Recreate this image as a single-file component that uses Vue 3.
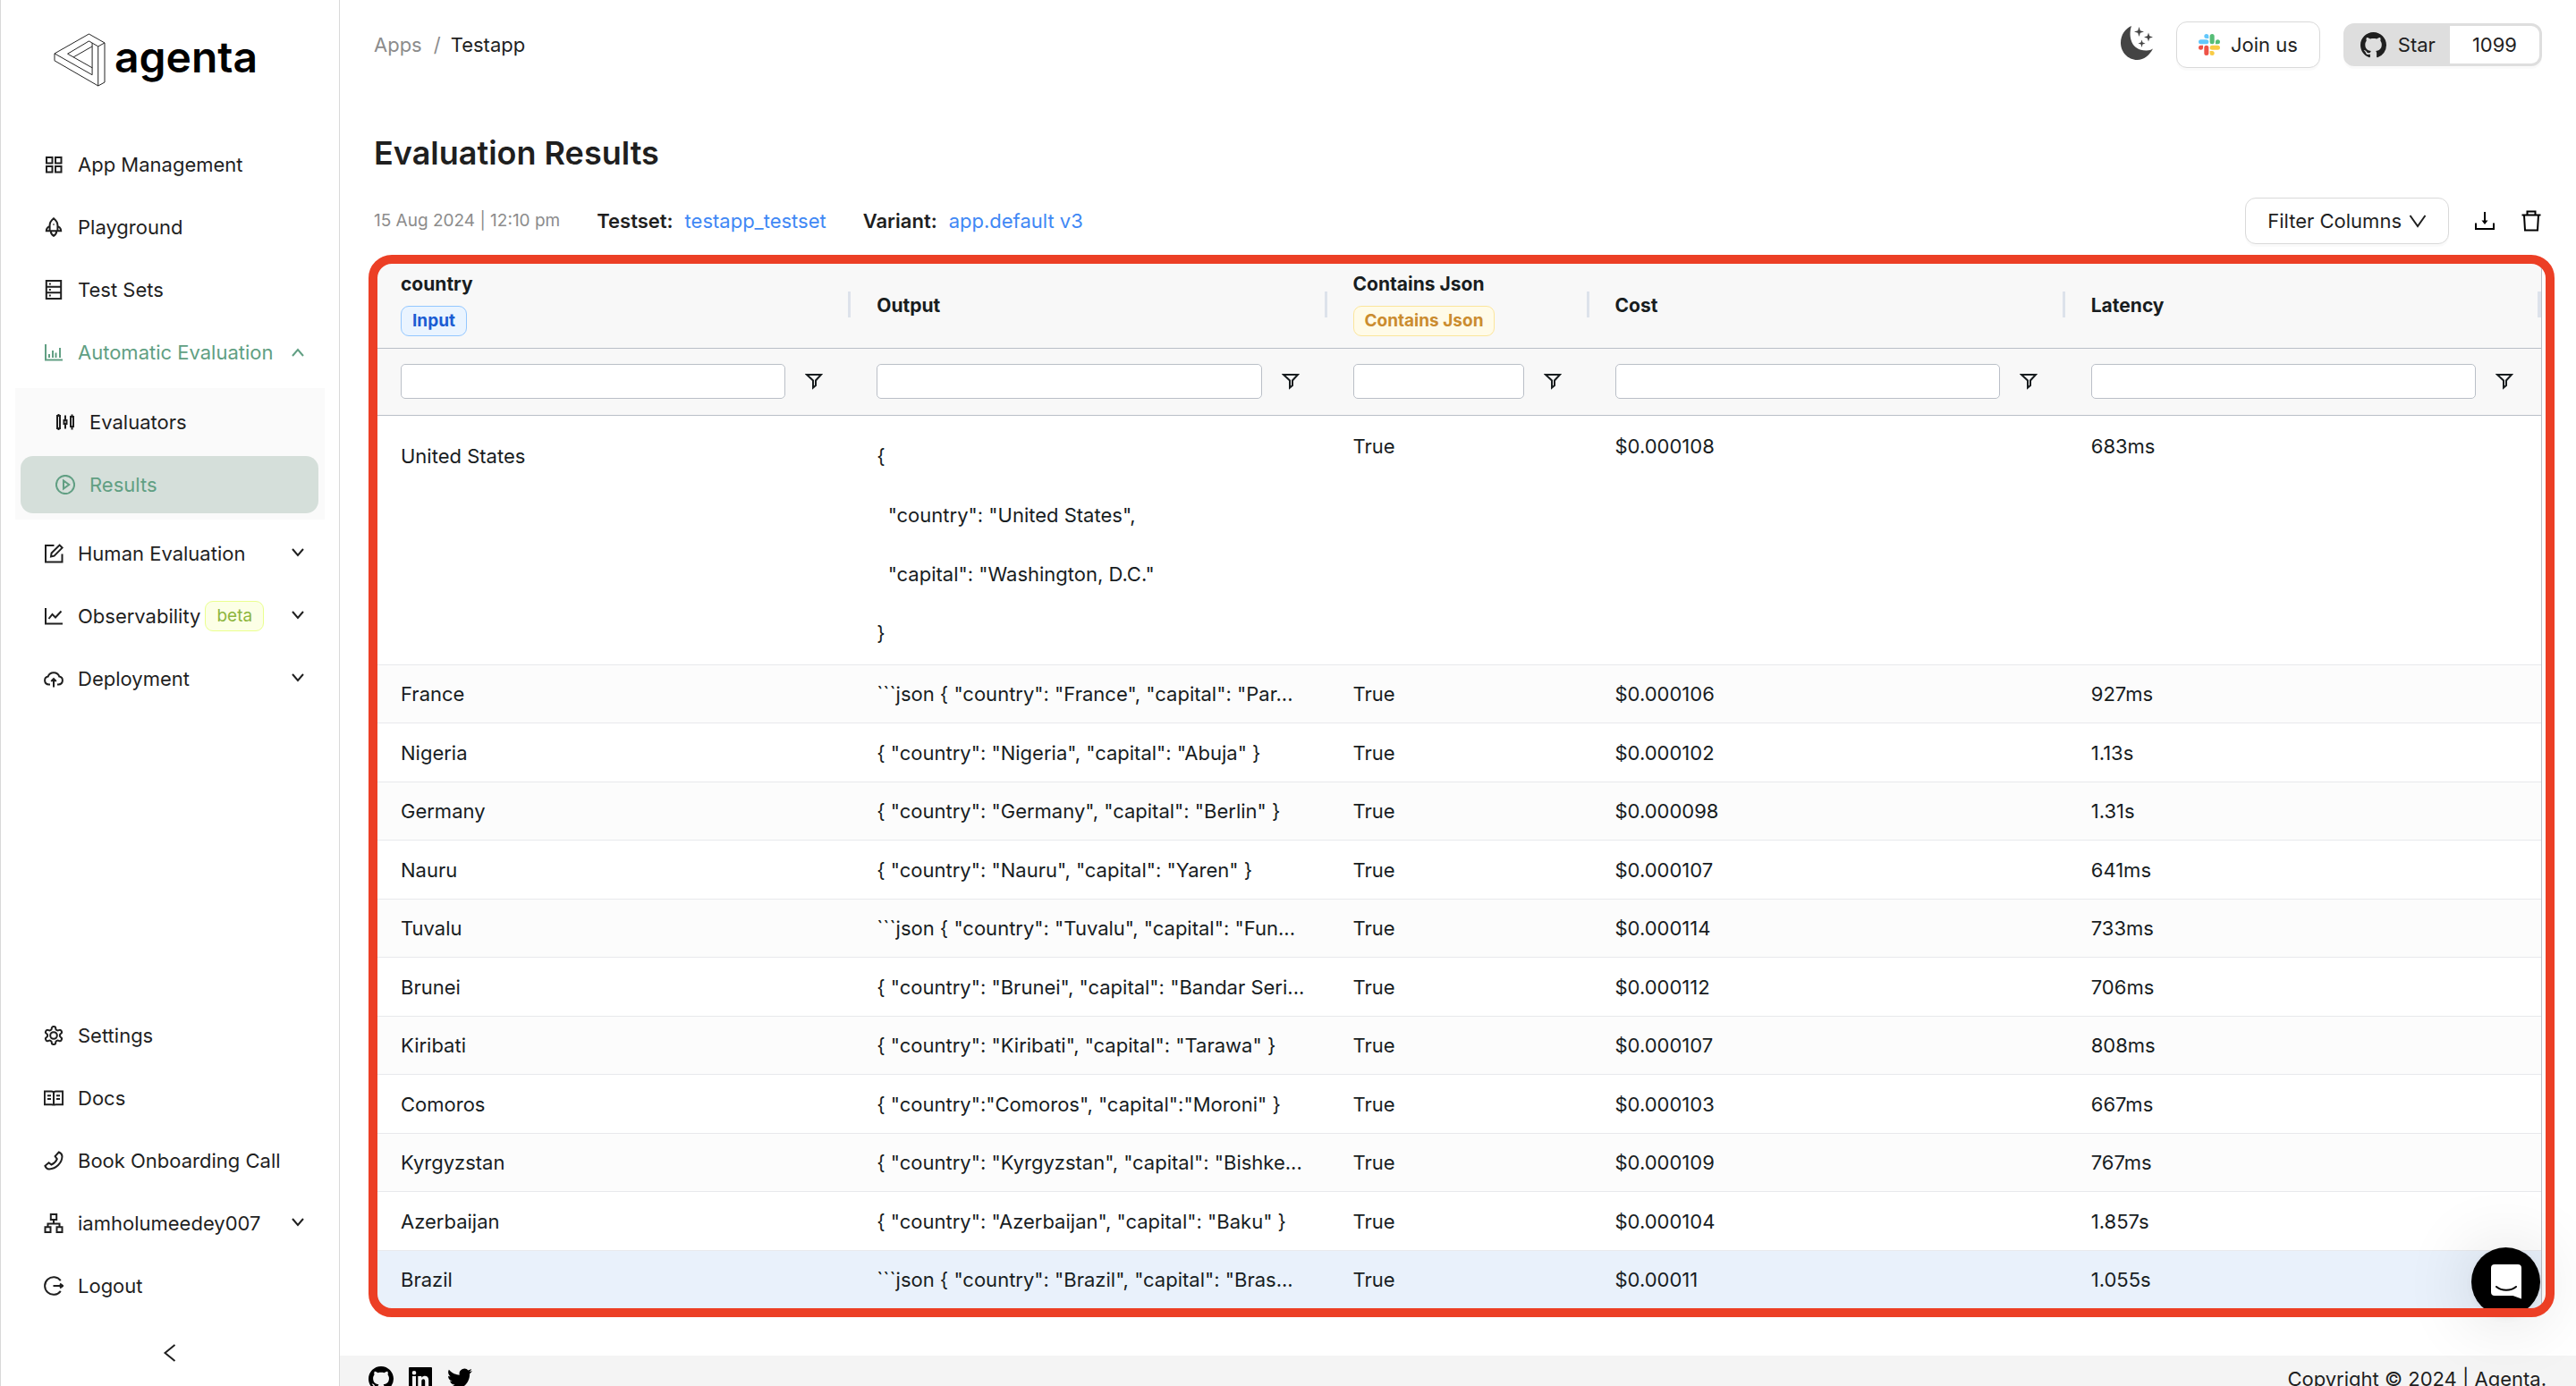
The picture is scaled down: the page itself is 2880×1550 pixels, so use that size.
<script setup>
import { ref } from "vue"

const GITHUB =
  "M8 0C3.58 0 0 3.58 0 8c0 3.54 2.29 6.53 5.47 7.59.4.07.55-.17.55-.38 0-.19-.01-.82-.01-1.49-2.01.37-2.53-.49-2.69-.94-.09-.23-.48-.94-.82-1.13-.28-.15-.68-.52-.01-.53.63-.01 1.08.58 1.23.82.72 1.21 1.87.87 2.33.66.07-.52.28-.87.51-1.07-1.78-.2-3.64-.89-3.64-3.95 0-.87.31-1.59.82-2.15-.08-.2-.36-1.02.08-2.12 0 0 .67-.21 2.2.82.64-.18 1.32-.27 2-.27s1.36.09 2 .27c1.53-1.04 2.2-.82 2.2-.82.44 1.1.16 1.92.08 2.12.51.56.82 1.27.82 2.15 0 3.07-1.87 3.75-3.65 3.95.29.25.54.73.54 1.48 0 1.07-.01 1.93-.01 2.2 0 .21.15.46.55.38A8.01 8.01 0 0 0 16 8c0-4.42-3.58-8-8-8z"

// 22x22 outline glyphs
const icons = {
  apps: "M3 3h6.5v6.5H3zM13 3h6.5v6.5H13zM3 13h6.5v6.5H3zM13 13h6.5v6.5H13z",
  rocket:
    "M11 1.2C8 3.6 6.6 6.4 6.6 9v6.2h8.8V9c0-2.600-1.400-5.400-4.400-7.800zM6.600 9.800C4 11 2.800 12.800 2.800 15.200h3.800M15.400 9.800c2.600 1.200 3.800 3 3.800 5.400h-3.800M7.800 15.500c0 3 1.400 4.300 3.200 5.300 1.800-1 3.200-2.300 3.200-5.300M10.500 8h1",
  database: "M2.800 1h16.400v20H2.800zM2.800 7.700h16.400M2.800 14.300h16.400M6 4.400h1.800M6 11h1.800M6 17.600h1.800",
  bars: "M2 2v17.500h19M6 13v4M10 9v8M13.500 11.500V17M18 6v11",
  sliders:
    "M2 4h3v14H2zM3.500 2v2M3.500 18v2M9.500 9h3v4h-3zM11 3.500V9M11 13v5.500M17 5h3v11h-3zM18.500 2.500V5M18.500 16v3.500",
  play: "M11 .9a10.100 10.100 0 1 0 0 20.200A10.100 10.100 0 0 0 11 .9zM9 6.500v9l6.200-4.500z",
  form: "M11.500 2H2v18.500h18.500v-9M8 14.500l.6-4L17.600 1.600l3 3-9 9z",
  line: "M2 2v17.500h19M5.500 14l4-5 3.500 3.500 6.500-7",
  cloud:
    "M7 17.500H5.500a4.500 4.500 0 0 1-.800-8.900 6.700 6.700 0 0 1 12.600 0 4.500 4.500 0 0 1-.8 8.900H15M11 20.500v-9M8.200 14L11 11.200 13.800 14",
  read: "M.9 3.500h7.600c1.300 0 2.500.7 2.500 1.500 0-.8 1.200-1.500 2.500-1.500h7.600v14.700h-7.600c-1.300 0-2.500.6-2.500 1.400 0-.8-1.200-1.400-2.500-1.400H.9zM11 5v14M4 8.300h4M4 12h4M14 8.300h4M14 12h4",
  phone:
    "M16.800 1.500c1.800.8 3.600 2.900 3.700 4.700C20.300 13.500 13.500 20.200 6 20.400c-1.900-.1-3.900-1.700-4.600-3.600l4.200-3.600 2.900 2.300c2.900-1.200 5.200-3.500 6.300-6.300L12.600 6z",
  tree: "M7.800 1h6.400v6H7.800zM1.500 15.300h6v5.700h-6zM14.500 15.300h6v5.700h-6zM11 7v4.500M4.500 15.300v-3.800h13v3.800",
  logout: "M18.800 5.200a9.800 9.800 0 1 0 0 11.600M10.500 11H21M18 8.600l3.200 2.400-3.200 2.400",
}

const mainMenu = [
  { label: "App Management", icon: "apps" },
  { label: "Playground", icon: "rocket" },
  { label: "Test Sets", icon: "database" },
  {
    label: "Automatic Evaluation",
    icon: "bars",
    open: true,
    expandable: true,
    children: [
      { label: "Evaluators", icon: "sliders" },
      { label: "Results", icon: "play", active: true },
    ],
  },
  { label: "Human Evaluation", icon: "form", expandable: true },
  { label: "Observability", icon: "line", expandable: true, tag: "beta" },
  { label: "Deployment", icon: "cloud", expandable: true },
]
const bottomMenu = [
  { label: "Settings", icon: "gear" },
  { label: "Docs", icon: "read" },
  { label: "Book Onboarding Call", icon: "phone" },
  { label: "iamholumeedey007", icon: "tree", expandable: true },
  { label: "Logout", icon: "logout" },
]

const columns = [
  { label: "country", tag: "Input", tone: "blue" },
  { label: "Output" },
  { label: "Contains Json", tag: "Contains Json", tone: "gold", narrow: true },
  { label: "Cost" },
  { label: "Latency" },
]
const filters = ref(columns.map(() => ""))

const rows = [
  ["United States", '{\n  "country": "United States",\n  "capital": "Washington, D.C."\n}', "$0.000108", "683ms"],
  ["France", '```json { "country": "France", "capital": "Par...', "$0.000106", "927ms"],
  ["Nigeria", '{ "country": "Nigeria", "capital": "Abuja" }', "$0.000102", "1.13s"],
  ["Germany", '{ "country": "Germany", "capital": "Berlin" }', "$0.000098", "1.31s"],
  ["Nauru", '{ "country": "Nauru", "capital": "Yaren" }', "$0.000107", "641ms"],
  ["Tuvalu", '```json { "country": "Tuvalu", "capital": "Fun...', "$0.000114", "733ms"],
  ["Brunei", '{ "country": "Brunei", "capital": "Bandar Seri...', "$0.000112", "706ms"],
  ["Kiribati", '{ "country": "Kiribati", "capital": "Tarawa" }', "$0.000107", "808ms"],
  ["Comoros", '{ "country":"Comoros", "capital":"Moroni" }', "$0.000103", "667ms"],
  ["Kyrgyzstan", '{ "country": "Kyrgyzstan", "capital": "Bishke...', "$0.000109", "767ms"],
  ["Azerbaijan", '{ "country": "Azerbaijan", "capital": "Baku" }', "$0.000104", "1.857s"],
  ["Brazil", '```json { "country": "Brazil", "capital": "Bras...', "$0.00011", "1.055s"],
]

const menus = [mainMenu, bottomMenu]
</script>

<template>
  <div class="page">
    <aside class="sidebar">
      <a href="#" class="logo">
        <svg class="logo-mark" viewBox="178 111 175 181" aria-hidden="true">
          <path
            d="M297 114L350 144V277L328 289L181 204V180ZM181 180L308 252V144M308 228L225 181L297 138L328 156L350 144M328 156V289M245 192L308 156"
          />
        </svg>
        <span>agenta</span>
      </a>
      <nav v-for="(menu, m) in menus" :key="m" class="menu" :class="{ bottom: m === 1 }">
        <template v-for="item in menu" :key="item.label">
          <a href="#" class="item" :class="{ open: item.open }">
            <svg v-if="item.icon === 'gear'" class="icon" viewBox="1 1 22 22" aria-hidden="true">
              <path
                d="M12.22 2h-.44a2 2 0 0 0-2 2v.18a2 2 0 0 1-1 1.73l-.43.25a2 2 0 0 1-2 0l-.15-.08a2 2 0 0 0-2.73.73l-.22.38a2 2 0 0 0 .73 2.730l.15.1a2 2 0 0 1 1 1.720v.51a2 2 0 0 1-1 1.740l-.15.09a2 2 0 0 0-.73 2.730l.22.38a2 2 0 0 0 2.730.73l.15-.08a2 2 0 0 1 2 0l.43.25a2 2 0 0 1 1 1.730V20a2 2 0 0 0 2 2h.44a2 2 0 0 0 2-2v-.18a2 2 0 0 1 1-1.730l.43-.25a2 2 0 0 1 2 0l.15.08a2 2 0 0 0 2.730-.73l.22-.39a2 2 0 0 0-.73-2.730l-.15-.08a2 2 0 0 1-1-1.740v-.5a2 2 0 0 1 1-1.740l.15-.09a2 2 0 0 0 .73-2.730l-.22-.38a2 2 0 0 0-2.730-.73l-.15.08a2 2 0 0 1-2 0l-.43-.25a2 2 0 0 1-1-1.730V4a2 2 0 0 0-2-2z"
              />
              <circle cx="12" cy="12" r="3.800" />
            </svg>
            <svg v-else class="icon" viewBox="0 0 22 22" aria-hidden="true"><path :d="icons[item.icon]" /></svg>
            <span>{{ item.label }}</span>
            <span v-if="item.tag" class="tag lime">{{ item.tag }}</span>
            <svg v-if="item.expandable" class="caret" viewBox="0 0 16 16" aria-hidden="true">
              <path :d="item.open ? 'M2 12l6-7 6 7' : 'M2 3l6 7 6-7'" />
            </svg>
          </a>
          <div v-if="item.children" class="submenu">
            <a v-for="child in item.children" :key="child.label" href="#" class="item" :class="{ active: child.active }">
              <svg class="icon" viewBox="0 0 22 22" aria-hidden="true"><path :d="icons[child.icon]" /></svg>
              <span>{{ child.label }}</span>
            </a>
          </div>
        </template>
      </nav>
      <button class="collapse" aria-label="Collapse sidebar">
        <svg viewBox="0 0 22 22" aria-hidden="true"><path d="M16.500 2L5.500 11l11 9" /></svg>
      </button>
    </aside>

    <div class="body">
      <main class="content">
        <header class="topbar">
          <nav class="crumbs" aria-label="Breadcrumb">
            <a href="#">Apps</a><span class="slash">/</span><span class="current">Testapp</span>
          </nav>
          <button class="theme" aria-label="Toggle theme">
            <svg viewBox="0 0 36 38" aria-hidden="true">
              <path
                d="M12 0C8 12 12 28 29 27.500c3 0 5-.8 7-2C32 33 26 38 18.500 38 8 38 0 29 0 19 0 10 5 3 12 0zM20.500 1l1.300 4.200L26 6.500l-4.200 1.300-1.300 4.200-1.300-4.200L15 6.500l4.200-1.300zM31 7.500l1.200 3.800L36 12.500l-3.800 1.200L31 17.500l-1.200-3.800L26 12.500l3.800-1.200zM23.500 15.500l1 3 3 1-3 1-1 3.500-1-3.500-3-1 3-1z"
              />
            </svg>
          </button>
          <button class="btn join">
            <svg viewBox="0 0 24 24" aria-hidden="true">
              <path
                fill="#ee5247"
                d="M5.042 15.165a2.528 2.528 0 0 1-2.520 2.523A2.528 2.528 0 0 1 0 15.165a2.527 2.527 0 0 1 2.522-2.520h2.520v2.520zM6.313 15.165a2.527 2.527 0 0 1 2.521-2.520 2.527 2.527 0 0 1 2.521 2.520v6.313A2.528 2.528 0 0 1 8.834 24a2.528 2.528 0 0 1-2.521-2.522v-6.313z"
              />
              <path
                fill="#62c7fb"
                d="M8.834 5.042a2.528 2.528 0 0 1-2.521-2.520A2.528 2.528 0 0 1 8.834 0a2.528 2.528 0 0 1 2.521 2.522v2.520H8.834zM8.834 6.313a2.528 2.528 0 0 1 2.521 2.521 2.528 2.528 0 0 1-2.521 2.521H2.522A2.528 2.528 0 0 1 0 8.834a2.528 2.528 0 0 1 2.522-2.521h6.312z"
              />
              <path
                fill="#55bd76"
                d="M18.956 8.834a2.528 2.528 0 0 1 2.522-2.521A2.528 2.528 0 0 1 24 8.834a2.528 2.528 0 0 1-2.522 2.521h-2.522V8.834zM17.688 8.834a2.528 2.528 0 0 1-2.523 2.521 2.527 2.527 0 0 1-2.520-2.521V2.522A2.527 2.527 0 0 1 15.165 0a2.528 2.528 0 0 1 2.523 2.522v6.312z"
              />
              <path
                fill="#f8cb45"
                d="M15.165 18.956a2.528 2.528 0 0 1 2.523 2.522A2.528 2.528 0 0 1 15.165 24a2.527 2.527 0 0 1-2.520-2.522v-2.522h2.520zM15.165 17.688a2.527 2.527 0 0 1-2.520-2.523 2.526 2.526 0 0 1 2.520-2.520h6.313A2.527 2.527 0 0 1 24 15.165a2.528 2.528 0 0 1-2.522 2.523h-6.313z"
              />
            </svg>
            Join us
          </button>
          <a href="#" class="star">
            <span class="star-label">
              <svg viewBox="0 0 16 16" aria-hidden="true"><path :d="GITHUB" /></svg>
              Star
            </span>
            <span class="star-count">1099</span>
          </a>
        </header>

        <h1>Evaluation Results</h1>

        <div class="meta">
          <span class="date">15 Aug 2024 | 12:10 pm</span>
          <span class="pair"><b>Testset:</b><a href="#">testapp_testset</a></span>
          <span class="pair"><b>Variant:</b><a href="#">app.default v3</a></span>
          <button class="btn filter-columns">
            Filter Columns
            <svg viewBox="0 0 20 20" aria-hidden="true"><path d="M1.500 4L10 16l8.500-12" /></svg>
          </button>
          <button class="tool" aria-label="Download">
            <svg viewBox="0 0 24 24" aria-hidden="true">
              <path d="M2 14.500V21h20v-6.500M12 2v11" /><path class="solid" d="M8.500 11.500h7L12 16z" />
            </svg>
          </button>
          <button class="tool" aria-label="Delete">
            <svg viewBox="0 0 24 24" aria-hidden="true"><path d="M1.500 5.500h21M7.500 5.500V1.500h9v4M4 5.500L5 22.500h14L20 5.500" /></svg>
          </button>
        </div>

        <section class="grid-wrap">
          <div class="grid">
            <table>
              <colgroup>
                <col v-for="c in columns" :key="c.label" :class="{ narrow: c.narrow }" />
              </colgroup>
              <thead>
                <tr class="titles">
                  <th v-for="c in columns" :key="c.label" scope="col">
                    <div class="head" :class="{ tagged: c.tag }">
                      <span>{{ c.label }}</span>
                      <span v-if="c.tag" class="tag" :class="c.tone">{{ c.tag }}</span>
                    </div>
                  </th>
                </tr>
                <tr class="filters">
                  <td v-for="(c, i) in columns" :key="c.label">
                    <div class="filter">
                      <input v-model="filters[i]" type="text" :aria-label="`${c.label} filter`" />
                      <button :aria-label="`Open ${c.label} filter menu`">
                        <svg viewBox="0 0 20 20" aria-hidden="true"><path d="M2 3h16l-6 6.500V15l-3 2.500v-8z" /></svg>
                      </button>
                    </div>
                  </td>
                </tr>
              </thead>
              <tbody>
                <tr v-for="(r, i) in rows" :key="r[0]" :class="{ tall: i === 0, hovered: i === rows.length - 1 }">
                  <td class="wrap">{{ r[0] }}</td>
                  <td class="wrap">{{ r[1] }}</td>
                  <td>True</td>
                  <td>{{ r[2] }}</td>
                  <td>{{ r[3] }}</td>
                </tr>
              </tbody>
            </table>
          </div>
          <div class="highlight"></div>
        </section>
      </main>

      <footer class="footer">
        <a href="#" aria-label="GitHub"><svg viewBox="0 0 16 16" aria-hidden="true"><path :d="GITHUB" /></svg></a>
        <a href="#" aria-label="LinkedIn">
          <svg viewBox="0 0 28 28" aria-hidden="true">
            <path
              fill-rule="evenodd"
              d="M2 1h24a1 1 0 0 1 1 1v24a1 1 0 0 1-1 1H2a1 1 0 0 1-1-1V2a1 1 0 0 1 1-1zM5 11v12h4V11zM7 5a2.300 2.300 0 1 0 0 4.600A2.300 2.300 0 0 0 7 5zM11.300 11v12h4v-6.500c0-3 3.900-3.200 3.900 0V23h4v-7.500c0-5.500-5.600-5.700-7.900-2.800V11z"
            />
          </svg>
        </a>
        <a href="#" aria-label="Twitter">
          <svg viewBox="0 0 24 24" aria-hidden="true">
            <path
              d="M23.953 4.570a10 10 0 01-2.825.775 4.958 4.958 0 002.163-2.723c-.951.555-2.005.959-3.127 1.184a4.920 4.920 0 00-8.384 4.482C7.690 8.095 4.067 6.130 1.640 3.162a4.822 4.822 0 00-.666 2.475c0 1.710.870 3.213 2.188 4.096a4.904 4.904 0 01-2.228-.616v.060a4.923 4.923 0 003.946 4.827 4.996 4.996 0 01-2.212.085 4.936 4.936 0 004.604 3.417 9.867 9.867 0 01-6.102 2.105c-.390 0-.779-.023-1.170-.067a13.995 13.995 0 007.557 2.209c9.053 0 13.998-7.496 13.998-13.985 0-.210 0-.420-.015-.630A9.935 9.935 0 0024 4.590z"
            />
          </svg>
        </a>
        <span class="copyright">Copyright © 2024 | Agenta.</span>
      </footer>
    </div>

    <button class="chat" aria-label="Open chat">
      <svg viewBox="0 0 34 39" aria-hidden="true">
        <path fill="#fff" d="M4 0h26a4 4 0 0 1 4 4v34.500L24.500 35H4a4 4 0 0 1-4-4V4a4 4 0 0 1 4-4z" />
        <path class="smile" d="M6 25c6 5 16 5 22 0" />
      </svg>
    </button>
  </div>
</template>

<style>
body {
  margin: 0;
  background: #fff;
}
</style>

<style scoped>
.page {
  display: flex;
  height: 100vh;
  overflow: hidden;
  font-family: Inter, "Liberation Sans", sans-serif;
  font-size: 22px;
  line-height: 32px;
  color: #1f1f1f;
}
.page *,
.page *::after {
  box-sizing: border-box;
}
a {
  color: inherit;
  text-decoration: none;
}
button {
  font: inherit;
  color: inherit;
  background: none;
  border: 0;
  padding: 0;
  cursor: pointer;
}
svg {
  display: block;
  flex: none;
}

/* Sidebar */
.sidebar {
  display: flex;
  flex-direction: column;
  flex: none;
  width: 380px;
  border: solid #d9d9d9;
  border-width: 0 1px;
}
.logo {
  display: flex;
  gap: 10px;
  padding: 37px 0 0 59px;
  margin-bottom: 55px;
  font-size: 48px;
  line-height: 54px;
  font-weight: 600;
  color: #000;
}
.logo-mark {
  width: 58px;
  height: 60px;
  fill: none;
  stroke: #222;
  stroke-width: 3;
}
.menu {
  display: flex;
  flex-direction: column;
  gap: 6px;
  padding: 0 16px;
}
.menu.bottom {
  margin-top: auto;
}
.item {
  display: flex;
  align-items: center;
  height: 64px;
  padding: 0 16px 0 32px;
  margin: 0 6px 0 0;
  border-radius: 14px;
  white-space: nowrap;
}
.icon {
  width: 22px;
  height: 22px;
  margin-right: 16px;
  fill: none;
  stroke: currentColor;
  stroke-width: 2;
}
.caret {
  width: 16px;
  height: 16px;
  margin-left: auto;
  fill: none;
  stroke: currentColor;
  stroke-width: 2;
}
.open,
.active {
  color: #619f83;
}
.submenu {
  display: flex;
  flex-direction: column;
  gap: 6px;
  padding: 6px 7px 7px 6px;
  margin-top: 2px;
  background: #fafafa;
}
.submenu .item {
  margin: 0;
  padding-left: 39px;
}
.active {
  background: #d5dfda;
}
.collapse {
  display: flex;
  align-items: center;
  justify-content: center;
  height: 74px;
  margin-top: 6px;
}
.collapse svg {
  width: 22px;
  height: 22px;
  fill: none;
  stroke: currentColor;
  stroke-width: 2;
}
.tag {
  height: 34px;
  padding: 0 12px;
  border: 1px solid;
  border-radius: 9px;
  font-size: 19px;
  line-height: 32px;
}
.lime {
  margin-left: 5px;
  color: #8db53c;
  background: #fcffe6;
  border-color: #eaff8f;
}
.blue {
  color: #1c5cd3;
  background: #eaf4ff;
  border-color: #94c7ff;
}
.gold {
  color: #cb8c2f;
  background: #fffbe8;
  border-color: #fbe59b;
}

/* Main area */
.body {
  flex: 1;
  min-width: 0;
}
.content {
  padding: 0 38px 51px;
}
.topbar {
  display: flex;
  align-items: center;
  height: 100px;
}
.crumbs {
  display: flex;
  margin-right: auto;
  color: #8c8c8c;
}
.slash {
  margin: 0 11px 0 13px;
}
.current {
  color: #1f1f1f;
}
.theme {
  margin-right: 26px;
  padding-bottom: 4px;
}
.theme svg {
  width: 36px;
  height: 38px;
  fill: #444;
}
.btn {
  display: flex;
  align-items: center;
  height: 52px;
  padding: 0 24px;
  border: 1px solid #d9d9d9;
  border-radius: 12px;
  background: #fff;
  box-shadow: 0 3px 0 rgba(0, 0, 0, 0.02);
}
.join {
  gap: 12px;
  margin-right: 26px;
}
.join svg {
  width: 24px;
  height: 24px;
}
.star {
  display: flex;
  height: 48px;
  border: 3px solid #dedede;
  border-radius: 12px;
  background: #dedede;
  box-shadow: 0 3px 0 rgba(0, 0, 0, 0.02);
}
.star-label {
  display: flex;
  align-items: center;
  gap: 13px;
  padding: 0 16px;
}
.star-label svg {
  width: 29px;
  height: 29px;
  fill: #1f1f1f;
}
.star-count {
  padding: 0 25px;
  line-height: 42px;
  background: #fff;
  border-radius: 0 9px 9px 0;
}
h1 {
  margin: 49px 0 28px;
  font-size: 36px;
  line-height: 44px;
  font-weight: 600;
}
.meta {
  display: flex;
  align-items: center;
  gap: 41px;
}
.date {
  font-size: 19px;
  color: #8c8c8c;
}
.pair {
  display: flex;
  gap: 13px;
}
.pair b {
  font-weight: 600;
}
.pair a {
  color: #4088f5;
}
.filter-columns {
  gap: 8px;
  margin-left: auto;
  margin-right: -13px;
}
.filter-columns svg {
  width: 20px;
  height: 20px;
  fill: none;
  stroke: currentColor;
  stroke-width: 2;
}
.tool + .tool {
  margin-left: -13px;
}
.tool svg {
  width: 24px;
  height: 24px;
  fill: none;
  stroke: #000;
  stroke-width: 2;
}
.tool .solid {
  fill: #000;
  stroke: none;
}

/* Results grid */
.grid-wrap {
  position: relative;
  margin-top: 21px;
}
.grid {
  border: 1px solid #babfc7;
  border-radius: 8px;
  overflow: hidden;
}
.highlight {
  position: absolute;
  z-index: 2;
  inset: -9px -14px -8px -6px;
  border: 10px solid #ec3f25;
  border-radius: 26px;
  pointer-events: none;
}
table {
  width: 100%;
  table-layout: fixed;
  border-collapse: separate;
  border-spacing: 0;
  color: #181d1f;
}
.narrow {
  width: 293px;
}
th,
td {
  padding: 0 29px;
  text-align: left;
}
thead th,
thead td {
  background: #f8f8f8;
  border-bottom: 1px solid #babfc7;
}
th {
  position: relative;
  height: 95px;
  font-size: 21px;
  font-weight: 700;
}
th::after {
  content: "";
  position: absolute;
  top: 31px;
  right: -1px;
  width: 4px;
  height: 29px;
  background: #dde2eb;
}
th:last-child::after {
  right: 0;
}
.head {
  display: flex;
  flex-direction: column;
  align-items: flex-start;
  gap: 8px;
}
.tagged {
  padding-bottom: 6px;
}
.filters td {
  height: 75px;
}
.filter {
  display: flex;
  align-items: center;
  gap: 22px;
  padding: 0 2px 2px 0;
}
.filter input {
  flex: 1;
  min-width: 0;
  height: 39px;
  padding: 0 8px;
  font: inherit;
  background: #fff;
  border: 1px solid #babfc7;
  border-radius: 5px;
}
.filter svg {
  width: 20px;
  height: 20px;
  fill: none;
  stroke: #181d1f;
  stroke-width: 2;
}
tbody td {
  height: 65px;
  line-height: 64px;
  border-bottom: 1px solid #e8e9ec;
  white-space: nowrap;
}
tbody tr:nth-child(odd) td {
  height: 66px;
}
tbody tr:nth-child(even) td {
  background: #fcfcfc;
}
tbody tr.tall td {
  height: 279px;
  line-height: 66px;
  padding-top: 1px;
  vertical-align: top;
}
tbody tr.tall .wrap {
  padding-top: 12px;
  white-space: pre-wrap;
}
tbody tr.hovered td {
  background: #e9f1fb;
}

.footer {
  display: flex;
  align-items: center;
  gap: 16px;
  height: 52px;
  padding: 0 33px 0 32px;
  background: #f4f4f4;
}
.footer svg {
  width: 28px;
  height: 28px;
  fill: #000;
}
.copyright {
  margin-left: auto;
}

.chat {
  position: fixed;
  z-index: 1;
  right: 40px;
  bottom: 78px;
  display: flex;
  align-items: center;
  justify-content: center;
  width: 77px;
  height: 77px;
  border-radius: 50%;
  background: #000;
  box-shadow: 0 2px 10px rgba(0, 0, 0, 0.06), 0 3px 80px rgba(0, 0, 0, 0.16);
}
.chat svg {
  width: 34px;
  height: 39px;
}
.smile {
  fill: none;
  stroke: #000;
  stroke-width: 2;
  stroke-linecap: round;
}
</style>
